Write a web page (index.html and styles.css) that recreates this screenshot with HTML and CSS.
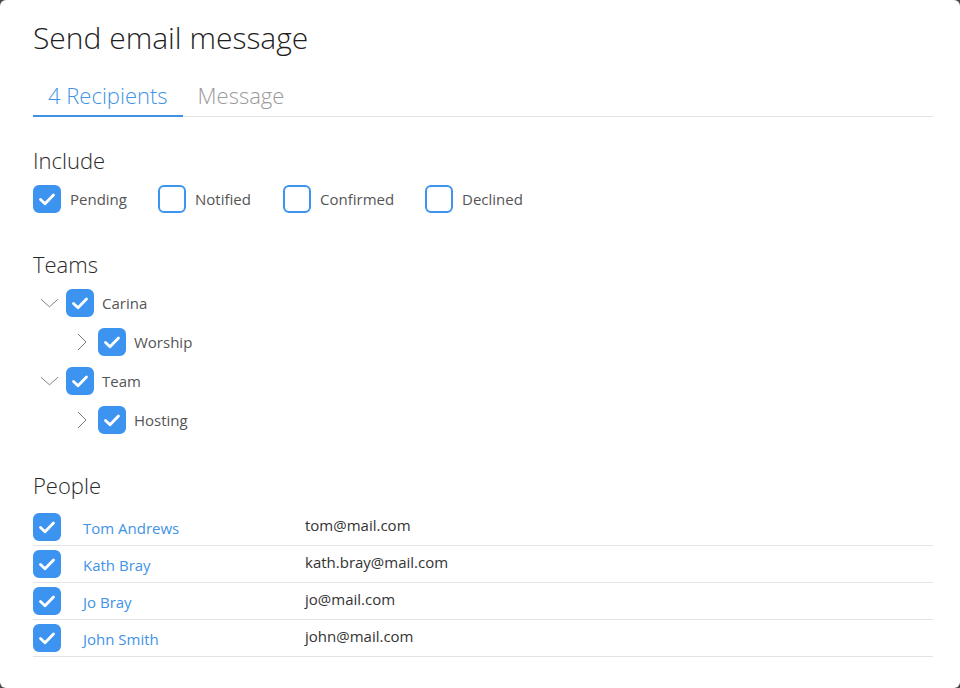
FILE: index.html
```html
<!DOCTYPE html>
<html>
<head>
<meta charset="utf-8">
<link rel="stylesheet" href="styles.css">
</head>
<body>
<div class="dialog">
  <h1 class="title">Send email message</h1>
  <div class="tabs">
    <div class="tab active">4 Recipients</div>
    <div class="tab">Message</div>
  </div>

  <h2 class="section include-head">Include</h2>
  <div class="include-row">
    <label class="opt"><span class="cb checked"><svg viewBox="0 0 24 24"><path d="M5.5 12.5l4.5 4.3 8.5-8.8"/></svg></span>Pending</label>
    <label class="opt"><span class="cb"></span>Notified</label>
    <label class="opt"><span class="cb"></span>Confirmed</label>
    <label class="opt"><span class="cb"></span>Declined</label>
  </div>

  <h2 class="section teams-head">Teams</h2>
  <div class="tree">
    <div class="node lvl1">
      <span class="chev"><svg viewBox="0 0 20 10"><path d="M1 1l9 8 9-8"/></svg></span>
      <span class="cb checked"><svg viewBox="0 0 24 24"><path d="M5.5 12.5l4.5 4.3 8.5-8.8"/></svg></span>
      <span class="node-label">Carina</span>
    </div>
    <div class="node lvl2">
      <span class="chev right"><svg viewBox="0 0 10 18"><path d="M1 1l8 8-8 8"/></svg></span>
      <span class="cb checked"><svg viewBox="0 0 24 24"><path d="M5.5 12.5l4.5 4.3 8.5-8.8"/></svg></span>
      <span class="node-label">Worship</span>
    </div>
    <div class="node lvl1">
      <span class="chev"><svg viewBox="0 0 20 10"><path d="M1 1l9 8 9-8"/></svg></span>
      <span class="cb checked"><svg viewBox="0 0 24 24"><path d="M5.5 12.5l4.5 4.3 8.5-8.8"/></svg></span>
      <span class="node-label">Team</span>
    </div>
    <div class="node lvl2">
      <span class="chev right"><svg viewBox="0 0 10 18"><path d="M1 1l8 8-8 8"/></svg></span>
      <span class="cb checked"><svg viewBox="0 0 24 24"><path d="M5.5 12.5l4.5 4.3 8.5-8.8"/></svg></span>
      <span class="node-label">Hosting</span>
    </div>
  </div>

  <h2 class="section people-head">People</h2>
  <div class="people">
    <div class="person">
      <span class="cb checked"><svg viewBox="0 0 24 24"><path d="M5.5 12.5l4.5 4.3 8.5-8.8"/></svg></span>
      <span class="name">Tom Andrews</span>
      <span class="email">tom@mail.com</span>
    </div>
    <div class="person">
      <span class="cb checked"><svg viewBox="0 0 24 24"><path d="M5.5 12.5l4.5 4.3 8.5-8.8"/></svg></span>
      <span class="name">Kath Bray</span>
      <span class="email">kath.bray@mail.com</span>
    </div>
    <div class="person">
      <span class="cb checked"><svg viewBox="0 0 24 24"><path d="M5.5 12.5l4.5 4.3 8.5-8.8"/></svg></span>
      <span class="name">Jo Bray</span>
      <span class="email">jo@mail.com</span>
    </div>
    <div class="person">
      <span class="cb checked"><svg viewBox="0 0 24 24"><path d="M5.5 12.5l4.5 4.3 8.5-8.8"/></svg></span>
      <span class="name">John Smith</span>
      <span class="email">john@mail.com</span>
    </div>
  </div>
</div>
</body>
</html>
```

FILE: styles.css
```css
html, body {
  margin: 0;
  padding: 0;
  height: 100%;
}
body {
  background: #4a4a4a;
  font-family: "Open Sans", "Noto Sans", sans-serif;
  color: #444;
}
.dialog {
  box-sizing: border-box;
  height: 688px;
  width: 960px;
  background: #fff;
  border-radius: 6px;
  padding: 18px 27px 0 33px;
}
.title {
  margin: 0;
  font-weight: 300;
  font-size: 30px;
  line-height: 40px;
  color: #1e1e1e;
}
.tabs {
  display: flex;
  margin-top: 19px;
  border-bottom: 1px solid #e3e3e3;
}
.tab {
  font-size: 22px;
  font-weight: 300;
  line-height: 36px;
  padding: 0 15px 2px;
  color: #9a9a9a;
  border-bottom: 2px solid transparent;
  margin-bottom: -1px;
}
.tab.active {
  color: #4193e6;
  border-bottom-color: #3f92e6;
}
.section {
  margin: 0;
  font-size: 22px;
  font-weight: 300;
  line-height: 30px;
  color: #2a2a2a;
}
.include-head { margin-top: 28px; }
.teams-head { margin-top: 36px; }
.people-head { margin-top: 31px; }

.include-row {
  display: flex;
  margin-top: 10px;
}
.opt {
  display: flex;
  align-items: center;
  font-size: 15px;
  color: #555;
}
.opt .cb { margin-right: 9px; }
.opt:nth-child(1) { width: 125px; }
.opt:nth-child(2) { width: 125px; }
.opt:nth-child(3) { width: 142px; }

.cb {
  box-sizing: border-box;
  flex: none;
  display: inline-flex;
  width: 28px;
  height: 28px;
  border-radius: 6px;
  border: 2px solid #3d93f0;
  background: #fff;
}
.cb.checked {
  background: #3d93f0;
}
.cb svg {
  width: 24px;
  height: 24px;
}
.cb svg path {
  fill: none;
  stroke: #fff;
  stroke-width: 2.8;
  stroke-linecap: round;
  stroke-linejoin: round;
}

.tree {
  margin-top: 4px;
}
.node {
  display: flex;
  align-items: center;
  height: 39px;
  font-size: 15px;
  color: #555;
}
.chev {
  flex: none;
  display: flex;
  align-items: center;
  justify-content: center;
  width: 33px;
}
.chev svg {
  width: 19px;
  height: 10px;
}
.chev svg path {
  fill: none;
  stroke: #7a7a7a;
  stroke-width: 1;
}
.lvl2 { padding-left: 32px; }
.chev.right svg {
  width: 10px;
  height: 18px;
}
.node-label { margin-left: 8px; }

.people {
  margin-top: 9px;
}
.person {
  display: flex;
  align-items: center;
  height: 37px;
  box-sizing: border-box;
  padding-bottom: 1px;
  border-bottom: 1px solid #e3e3e3;
  font-size: 15px;
}
.person .name {
  width: 222px;
  margin-left: 22px;
  padding-top: 2px;
  color: #4193e6;
}
.person .email {
  color: #333;
  padding-bottom: 4px;
}
```
